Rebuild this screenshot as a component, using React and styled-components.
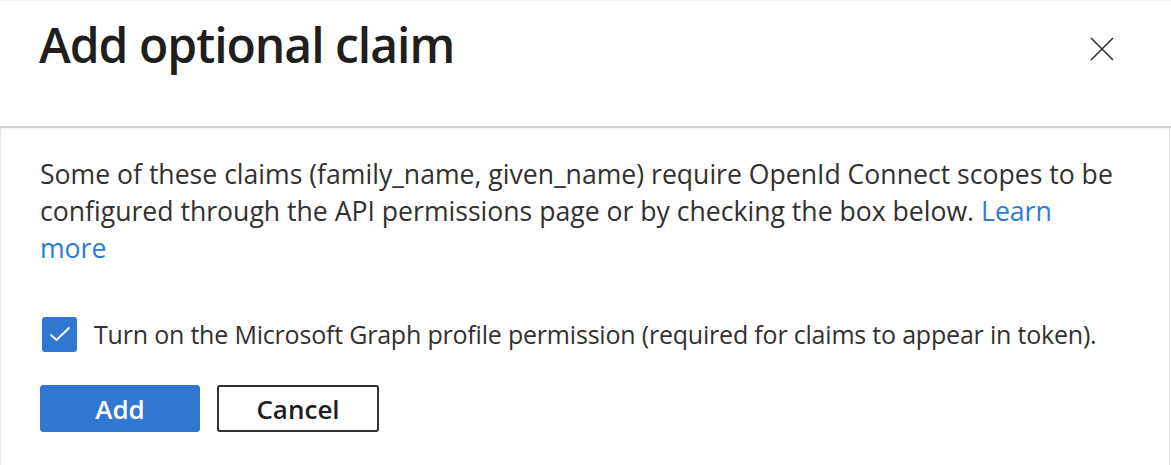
import { createGlobalStyle } from 'styled-components'
import styled from 'styled-components'

const GlobalStyle = createGlobalStyle`
  html, body {
    margin: 0;
    padding: 0;
    background: #fff;
  }
  body {
    font-family: "Open Sans", "Liberation Sans", sans-serif;
    color: #323130;
  }
`

const Panel = styled.div`
  width: 1171px;
  height: 465px;
  box-sizing: border-box;
  border-top: 1px solid #f0f0f0;
  display: flex;
  flex-direction: column;
  overflow: hidden;
`

const Header = styled.header`
  height: 127px;
  flex: none;
  box-sizing: border-box;
  padding: 12px 57px 0 39px;
  display: flex;
  justify-content: space-between;
  align-items: flex-start;
  border-bottom: 2px solid #d2d2d2;
  box-shadow: 0 1px 2px rgba(0, 0, 0, 0.06);
`

const Title = styled.h1`
  margin: 0;
  font-size: 48px;
  line-height: 64px;
  font-weight: 600;
  letter-spacing: -1px;
  color: #201f1e;
`

const CloseButton = styled.button`
  border: 0;
  background: none;
  padding: 0;
  margin-top: 24px;
  width: 24px;
  height: 24px;
  cursor: pointer;
  svg {
    display: block;
  }
`

const Body = styled.div`
  flex: 1;
  padding: 28px 40px 0 39px;
  border-left: 1px solid #e6e6e6;
  border-right: 1px solid #e6e6e6;
  margin-right: 1px;
`

const Text = styled.p`
  margin: 0;
  font-size: 26.6px;
  line-height: 37px;
  color: #323130;
`

const Link = styled.a`
  color: #2b7cd3;
  text-decoration: none;
`

const CheckRow = styled.label`
  display: flex;
  align-items: center;
  gap: 17px;
  margin-top: 49px;
  margin-left: 2px;
  font-size: 25px;
  letter-spacing: -0.2px;
  line-height: 36px;
  white-space: nowrap;
`

const Box = styled.span`
  width: 35px;
  height: 35px;
  flex: none;
  border-radius: 3px;
  background: #2f77d0;
  display: flex;
  align-items: center;
  justify-content: center;
`

const Actions = styled.div`
  display: flex;
  gap: 17px;
  margin-top: 33px;
`

const Button = styled.button`
  width: ${p => (p.$primary ? '160px' : '162px')};
  height: 47px;
  box-sizing: border-box;
  border-radius: 3px;
  font-family: inherit;
  font-size: 26px;
  font-weight: 600;
  cursor: pointer;
  border: ${p => (p.$primary ? '1px solid #2f77d0' : '2px solid #323130')};
  background: ${p => (p.$primary ? '#2f77d0' : '#fff')};
  color: ${p => (p.$primary ? '#fff' : '#201f1e')};
`

export default function App() {
  return (
    <>
      <GlobalStyle />
      <Panel>
        <Header>
          <Title>Add optional claim</Title>
          <CloseButton aria-label="Close">
            <svg width="24" height="24" viewBox="0 0 24 24">
              <path d="M1 1 L23 23 M23 1 L1 23" stroke="#323130" strokeWidth="1.6" />
            </svg>
          </CloseButton>
        </Header>
        <Body>
          <Text>
            Some of these claims (family_name, given_name) require OpenId Connect scopes to be
            <br />
            configured through the API permissions page or by checking the box below. <Link href="#">Learn</Link>
            <br />
            <Link href="#">more</Link>
          </Text>
          <CheckRow>
            <Box>
              <svg width="22" height="16" viewBox="0 0 22 16">
                <path d="M1.5 8.5 L7.5 14 L20.5 1.5" fill="none" stroke="#fff" strokeWidth="2" />
              </svg>
            </Box>
            Turn on the Microsoft Graph profile permission (required for claims to appear in token).
          </CheckRow>
          <Actions>
            <Button $primary>Add</Button>
            <Button>Cancel</Button>
          </Actions>
        </Body>
      </Panel>
    </>
  )
}
